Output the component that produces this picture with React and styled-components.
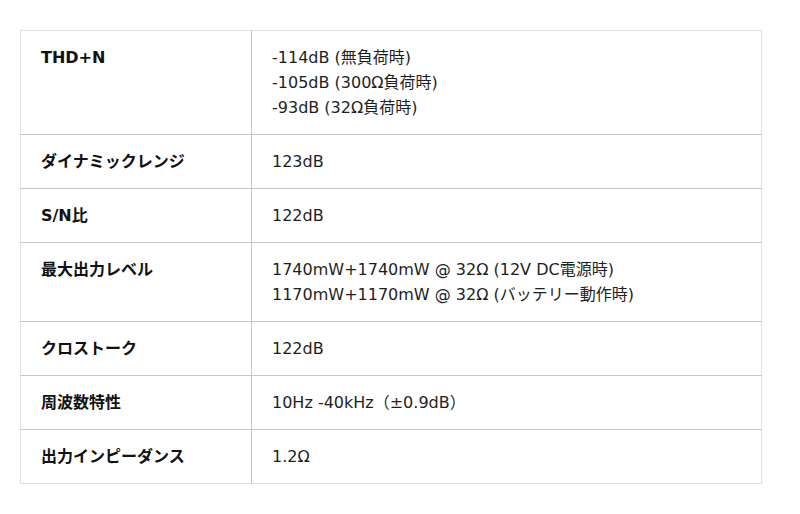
import styled, { createGlobalStyle } from 'styled-components'

const GlobalStyle = createGlobalStyle`
  body {
    margin: 0;
    background: #fff;
    font-family: "DejaVu Sans", "Noto Sans CJK JP", sans-serif;
    color: #222;
  }
`

const specs = [
  { label: 'THD+N', values: ['-114dB (無負荷時)', '-105dB (300Ω負荷時)', '-93dB (32Ω負荷時)'] },
  { label: 'ダイナミックレンジ', values: ['123dB'] },
  { label: 'S/N比', values: ['122dB'] },
  { label: '最大出力レベル', values: ['1740mW+1740mW @ 32Ω (12V DC電源時)', '1170mW+1170mW @ 32Ω (バッテリー動作時)'] },
  { label: 'クロストーク', values: ['122dB'] },
  { label: '周波数特性', values: ['10Hz -40kHz（±0.9dB）'] },
  { label: '出力インピーダンス', values: ['1.2Ω'] },
]

export default function App() {
  return (
    <>
      <GlobalStyle />
      <Page>
        <SpecTable>
          <tbody>
            {specs.map((row) => (
              <Row key={row.label}>
                <Label>{row.label}</Label>
                <Value>
                  {row.values.map((v) => (
                    <Line key={v}>{v}</Line>
                  ))}
                </Value>
              </Row>
            ))}
          </tbody>
        </SpecTable>
      </Page>
    </>
  )
}

const Page = styled.div`
  padding: 30px 38px 30px 20px;
`

const SpecTable = styled.table`
  width: 742px;
  border-collapse: collapse;
  border: 1px solid #e0e0e0;
`

const Row = styled.tr`
  border-top: 1px solid #c8c8c8;

  &:first-child {
    border-top: 1px solid #e0e0e0;
  }
`

const Label = styled.th`
  width: 231px;
  padding: 14px 20px 14px 20px;
  text-align: left;
  vertical-align: top;
  font-size: 16px;
  line-height: 25px;
  font-weight: bold;
  color: #111;
  border-right: 1px solid #c8c8c8;
  box-sizing: border-box;
`

const Value = styled.td`
  padding: 14px 20px 14px 20px;
  vertical-align: top;
  font-size: 16px;
  line-height: 25px;
  color: #1e1e1e;
`

const Line = styled.div``
